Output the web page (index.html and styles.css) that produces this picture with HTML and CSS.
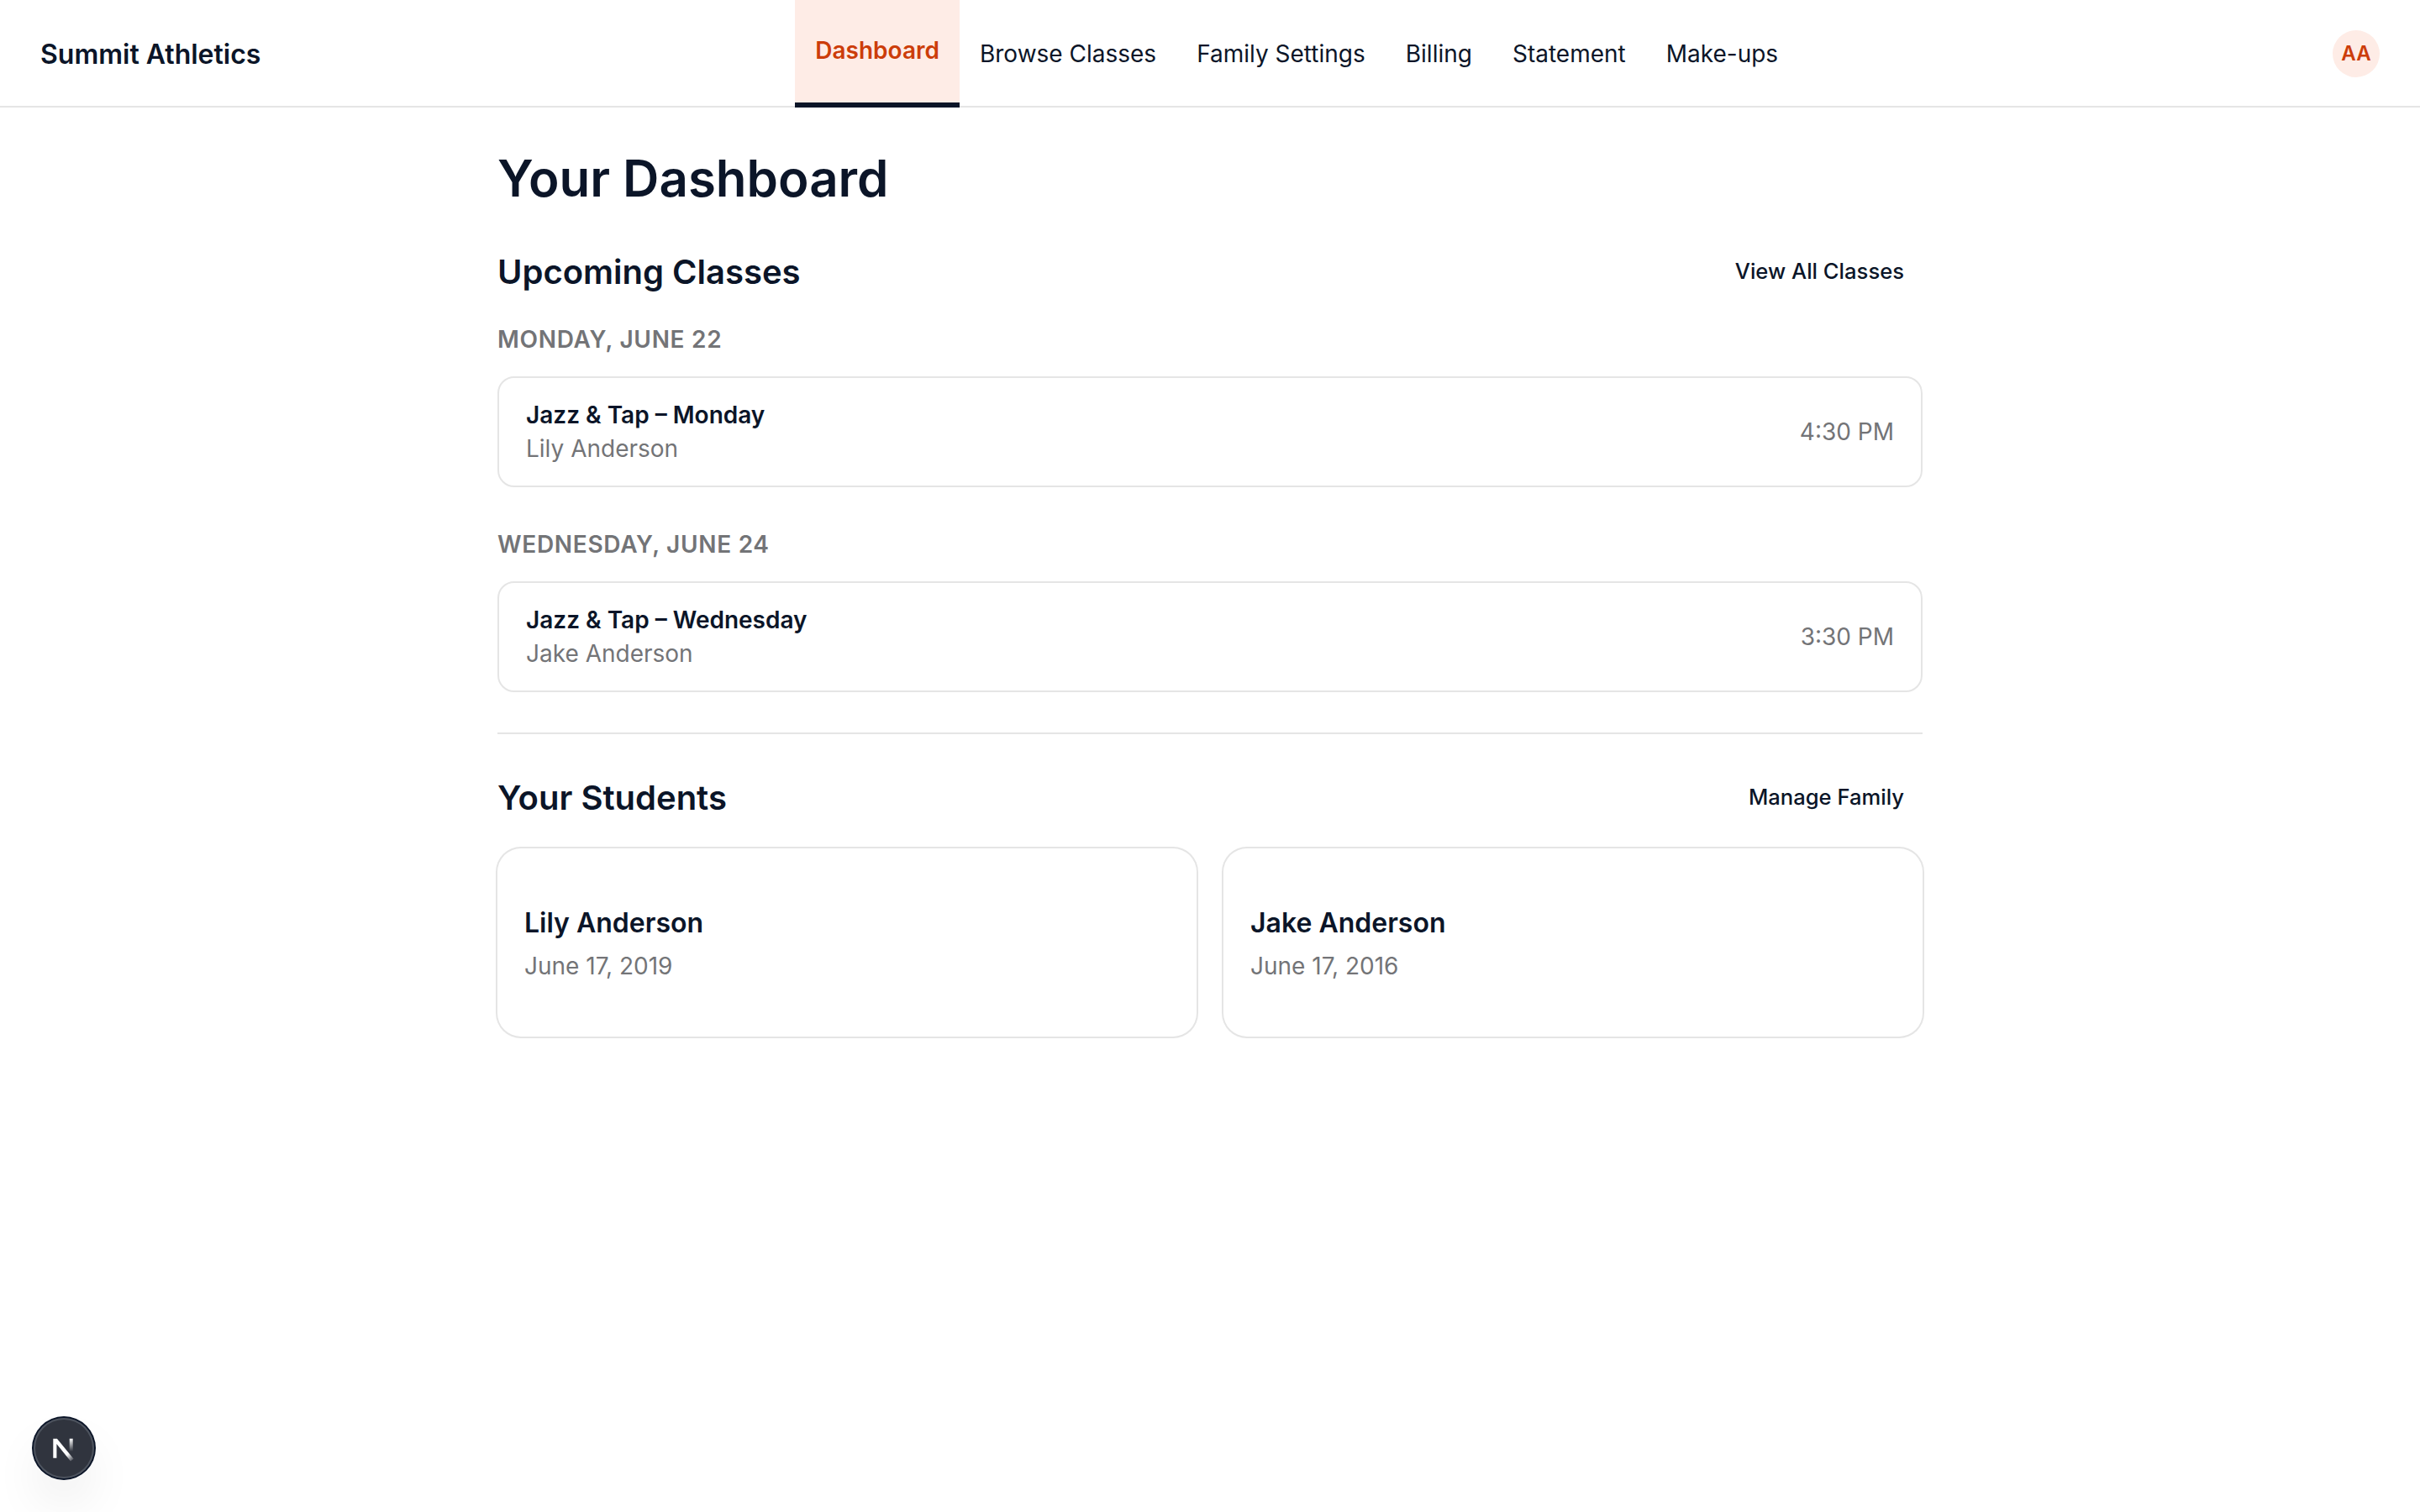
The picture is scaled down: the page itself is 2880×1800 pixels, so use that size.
FILE: index.html
```html
<!DOCTYPE html>
<html lang="en">
<head>
<meta charset="utf-8">
<title>Summit Athletics</title>
<link rel="stylesheet" href="styles.css">
</head>
<body>
<header class="topbar">
  <a class="brand">Summit Athletics</a>
  <nav class="nav">
    <a class="nav-link active">Dashboard</a>
    <a class="nav-link">Browse Classes</a>
    <a class="nav-link">Family Settings</a>
    <a class="nav-link">Billing</a>
    <a class="nav-link">Statement</a>
    <a class="nav-link">Make-ups</a>
  </nav>
  <span class="avatar">AA</span>
</header>
<main class="page">
  <h1 class="page-title">Your Dashboard</h1>
  <section class="upcoming">
    <div class="section-head">
      <h2 class="section-title">Upcoming Classes</h2>
      <a class="ghost-button">View All Classes</a>
    </div>
    <div class="days">
      <div class="day">
        <h3 class="day-label">Monday, June 22</h3>
        <div class="class-card">
          <div>
            <p class="class-name">Jazz &amp; Tap – Monday</p>
            <p class="muted">Lily Anderson</p>
          </div>
          <span class="muted">4:30 PM</span>
        </div>
      </div>
      <div class="day">
        <h3 class="day-label">Wednesday, June 24</h3>
        <div class="class-card">
          <div>
            <p class="class-name">Jazz &amp; Tap – Wednesday</p>
            <p class="muted">Jake Anderson</p>
          </div>
          <span class="muted">3:30 PM</span>
        </div>
      </div>
    </div>
  </section>
  <hr class="divider">
  <section class="students">
    <div class="section-head">
      <h2 class="section-title">Your Students</h2>
      <a class="ghost-button">Manage Family</a>
    </div>
    <div class="student-grid">
      <article class="student-card">
        <h3 class="student-name">Lily Anderson</h3>
        <p class="muted">June 17, 2019</p>
      </article>
      <article class="student-card">
        <h3 class="student-name">Jake Anderson</h3>
        <p class="muted">June 17, 2016</p>
      </article>
    </div>
  </section>
</main>
<div class="dev-badge">
  <svg width="80" height="80" viewBox="0 0 80 80" fill="none">
    <defs>
      <linearGradient id="diag" gradientUnits="userSpaceOnUse" x1="39" y1="41" x2="50.5" y2="55">
        <stop stop-color="#fff"/><stop offset=".45" stop-color="#fff"/><stop offset="1" stop-color="#fff" stop-opacity=".1"/>
      </linearGradient>
      <linearGradient id="stem" gradientUnits="userSpaceOnUse" x1="48" y1="28.7" x2="48" y2="44">
        <stop stop-color="#fff"/><stop offset="1" stop-color="#fff" stop-opacity="0"/>
      </linearGradient>
    </defs>
    <path d="M27.3 28.7H31.9L51.6 52.8 48 55.6 31.4 35.1V51.7H27.3Z" fill="url(#diag)"/>
    <path d="M46.7 28.7h4V44h-4Z" fill="url(#stem)"/>
  </svg>
</div>
</body>
</html>
```
FILE: styles.css
```css
* { box-sizing: border-box; margin: 0; padding: 0; }

body {
  min-height: 1800px;
  background: #fff;
  color: #0b1528;
  font: 400 28px/40px Inter, "Liberation Sans", sans-serif;
  -webkit-font-smoothing: antialiased;
}

.topbar {
  display: flex;
  align-items: center;
  justify-content: space-between;
  height: 128px;
  padding: 0 48px;
  background: linear-gradient(#e5e5e5, #e5e5e5) bottom / 100% 2px no-repeat;
}
.brand { padding-top: 2px; font-size: 32px; font-weight: 600; }

.nav { display: flex; height: 128px; }
.nav-link { display: flex; align-items: center; padding: 0 24px; }
.nav-link.active {
  padding-bottom: 2px;
  background: #feece6;
  border-bottom: 6px solid #0b1528;
  color: #cc3d0a;
  font-weight: 600;
}

.avatar {
  display: flex;
  align-items: center;
  justify-content: center;
  width: 56px;
  height: 56px;
  border-radius: 50%;
  background: #feece6;
  color: #cc3d0a;
  font-size: 24px;
  font-weight: 600;
}

.page { width: 1696px; margin: 0 auto; padding-top: 48px; }
.page-title { margin-bottom: 48px; font-size: 60px; line-height: 72px; font-weight: 600; }

.section-head {
  display: flex;
  align-items: center;
  justify-content: space-between;
  height: 56px;
  margin-bottom: 32px;
}
.section-title { font-size: 40px; line-height: 56px; font-weight: 600; }
.ghost-button { padding: 0 22px 2px; font-size: 25.6px; font-weight: 500; }

.days { display: grid; gap: 48px; }
.day-label {
  margin-bottom: 24px;
  color: #737477;
  font-size: 28px;
  font-weight: 600;
  letter-spacing: .025em;
  text-transform: uppercase;
}
.class-card {
  display: flex;
  align-items: center;
  justify-content: space-between;
  padding: 24px 32px;
  border: 2px solid #e5e5e5;
  border-radius: 20px;
}
.class-name { font-weight: 600; }
.muted { color: #737477; }

.divider { margin: 48px 0; border: 0; border-top: 2px solid #e5e5e5; }

.student-grid { display: grid; grid-template-columns: 1fr 1fr; gap: 32px; }
.student-card {
  padding: 64px 32px;
  border-radius: 28px;
  box-shadow: 0 0 0 2px #e5e5e5;
}
.student-name { margin-bottom: 6px; font-size: 32px; line-height: 50px; font-weight: 600; }

.dev-badge {
  position: fixed;
  left: 40px;
  bottom: 40px;
  display: flex;
  align-items: center;
  justify-content: center;
  width: 72px;
  height: 72px;
  border-radius: 50%;
  background: #30343e;
  box-shadow: 0 0 0 2px #0b1528, inset 0 0 0 2px #4d535e, 0 32px 64px -16px rgba(0, 0, 0, .2);
}
.dev-badge svg { flex: none; }
```
